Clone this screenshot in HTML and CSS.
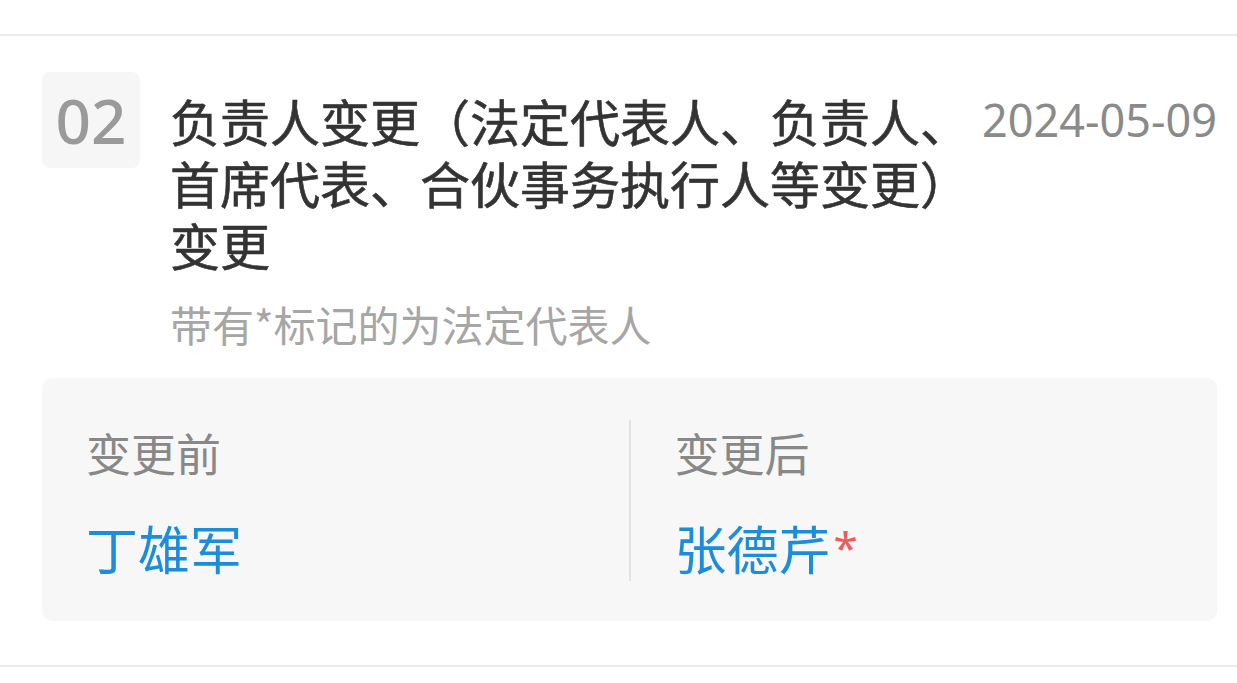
FILE: index.html
```html
<!DOCTYPE html>
<html lang="zh-CN">
<head>
  <meta charset="UTF-8">
  <title>变更记录</title>
  <link rel="stylesheet" href="styles.css">
</head>
<body>

  <div class="top-bar"></div>

  <section class="record">
    <div class="record-head">
      <div class="index-badge">02</div>
      <h2 class="record-title">负责人变更（法定代表人、负责人、首席代表、合伙事务执行人等变更）变更</h2>
      <div class="record-date">2024-05-09</div>
    </div>

    <p class="record-note">带有*标记的为法定代表人</p>

    <div class="change-panel">
      <div class="change-col">
        <div class="change-label">变更前</div>
        <div class="change-name">丁雄军</div>
      </div>
      <div class="change-col change-col-after">
        <div class="change-label">变更后</div>
        <div class="change-name">张德芹<span class="legal-mark">*</span></div>
      </div>
    </div>
  </section>

</body>
</html>
```

FILE: styles.css
```css
body {
  margin: 0;
  font-family: "Noto Sans CJK SC", "Noto Sans", sans-serif;
  background-color: #ffffff;
  color: #333333;
}

.top-bar {
  height: 34px;
  border-bottom: 2px solid #ebebeb;
}

.record {
  padding: 36px 20px 44px 42px;
  border-bottom: 2px solid #ebebeb;
}

.record-head {
  display: flex;
  align-items: flex-start;
}

.index-badge {
  flex: none;
  width: 98px;
  height: 96px;
  border-radius: 8px;
  background-color: #f6f6f6;
  color: #9a9a9a;
  font-family: "Noto Sans", sans-serif;
  font-size: 62px;
  font-weight: 500;
  line-height: 96px;
  text-align: center;
}

.record-title {
  flex: 1;
  margin: 0 0 0 30px;
  padding-top: 17px;
  font-size: 50px;
  font-weight: 400;
  line-height: 62px;
  color: #333333;
  -webkit-text-stroke: 0.6px #333333;
}

.record-date {
  flex: none;
  padding-top: 17px;
  font-family: "Noto Sans", sans-serif;
  font-size: 45px;
  line-height: 62px;
  color: #8a8a8a;
}

.record-note {
  margin: 21px 0 0 128px;
  font-size: 42px;
  line-height: 56px;
  color: #a6a6a6;
}

.change-panel {
  display: flex;
  margin-top: 26px;
  padding: 42px 0 40px;
  border-radius: 10px;
  background-color: #f7f7f7;
}

.change-col {
  flex: 1;
  padding: 5px 0 3px 44px;
}

.change-col-after {
  border-left: 2px solid #e3e3e3;
}

.change-label {
  font-size: 45px;
  line-height: 56px;
  color: #888888;
}

.change-name {
  margin-top: 37px;
  font-size: 52px;
  line-height: 60px;
  color: #1b8ddb;
}

.legal-mark {
  margin-left: 3px;
  color: #f25a5a;
  font-family: "Noto Sans", sans-serif;
  font-size: 44px;
  line-height: 0;
  vertical-align: 6px;
}
```
